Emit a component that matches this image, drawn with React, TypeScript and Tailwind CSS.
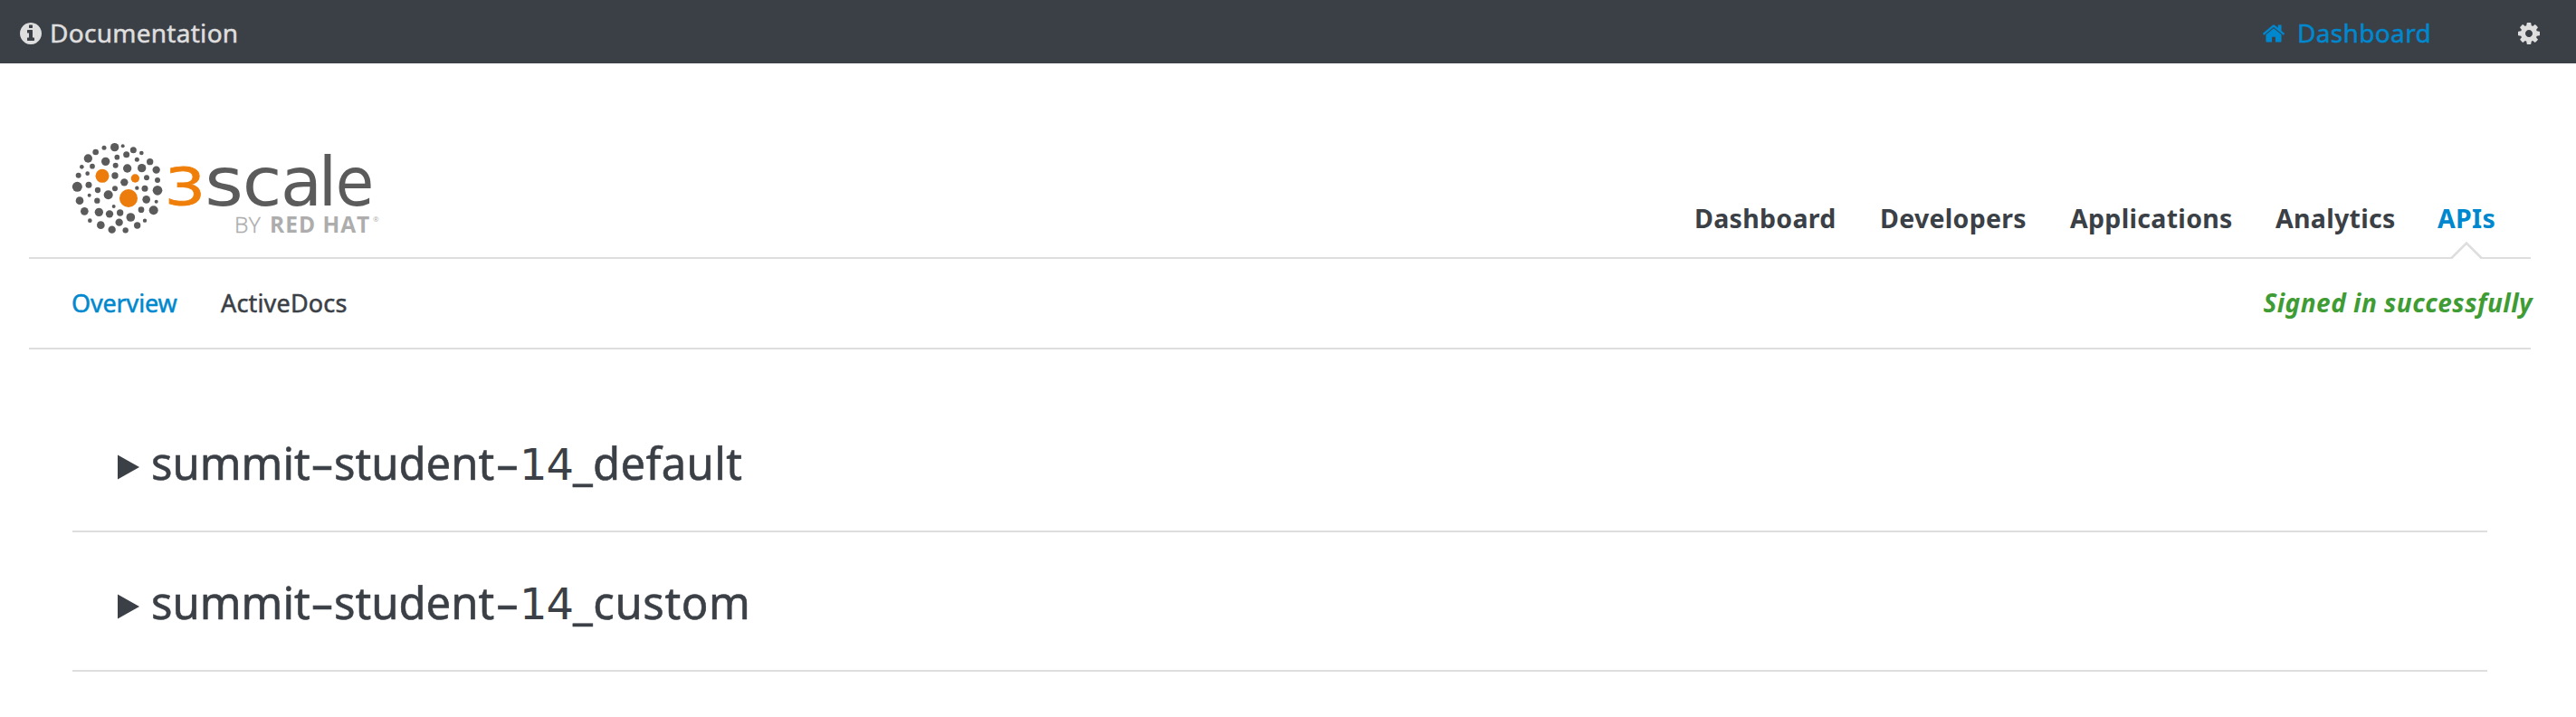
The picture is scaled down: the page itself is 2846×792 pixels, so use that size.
type IconProps = { viewBox: string; path: string; className: string };

const Icon = ({ viewBox, path, className }: IconProps) => (
  <svg viewBox={viewBox} className={className} fill="currentColor" aria-hidden="true">
    <path d={path} />
  </svg>
);

const INFO =
  'M1152 1376v-160q0-14-9-23t-23-9h-96v-512q0-14-9-23t-23-9h-320q-14 0-23 9t-9 23v160q0 14 9 23t23 9h96v320h-96q-14 0-23 9t-9 23v160q0 14 9 23t23 9h448q14 0 23-9t9-23zm-128-896v-160q0-14-9-23t-23-9h-192q-14 0-23 9t-9 23v160q0 14 9 23t23 9h192q14 0 23-9t9-23zm640 416q0 209-103 385.5t-279.5 279.5-385.5 103-385.5-103-279.5-279.5-103-385.5 103-385.5 279.5-279.5 385.5-103 385.5 103 279.5 279.5 103 385.5z';
const HOME =
  'M1472 992v480q0 26-19 45t-45 19h-384v-384h-256v384h-384q-26 0-45-19t-19-45v-480q0-1 .5-3t.5-3l575-474 575 474q1 2 1 6zm223-69l-62 74q-8 9-21 11h-3q-13 0-21-7l-692-577-692 577q-12 8-24 7-13-2-21-11l-62-74q-8-10-7-23.5t11-21.5l719-599q32-26 76-26t76 26l244 204v-195q0-14 9-23t23-9h192q14 0 23 9t9 23v408l219 182q10 8 11 21.5t-7 23.5z';
const COG =
  'M1152 896q0-106-75-181t-181-75-181 75-75 181 75 181 181 75 181-75 75-181zm512-109v222q0 12-8 23t-20 13l-185 28q-19 54-39 91 35 50 107 138 10 12 10 25t-9 23q-27 37-99 108t-94 71q-12 0-26-9l-138-108q-44 23-91 38-16 136-29 186-7 28-36 28h-222q-14 0-24.5-8.5t-11.5-21.5l-28-184q-49-16-90-37l-141 107q-10 9-25 9-14 0-25-11-126-114-165-168-7-10-7-23 0-12 8-23 15-21 51-66.5t54-70.5q-27-50-41-99l-183-27q-13-2-21-12.5t-8-23.5v-222q0-12 8-23t19-13l186-28q14-46 39-92-40-57-107-138-10-12-10-24 0-10 9-23 26-36 98.5-107.5t94.5-71.5q13 0 26 10l138 107q44-23 91-38 16-136 29-186 7-28 36-28h222q14 0 24.5 8.5t11.5 21.5l28 184q49 16 90 37l142-107q9-9 24-9 13 0 25 10 129 119 165 170 7 8 7 22 0 12-8 23-15 21-51 66.5t-54 70.5q26 50 41 98l183 28q13 2 21 12.5t8 23.5z';

// [cx, cy, r] of each grey dot in the globe mark
const DOTS: [number, number, number][] = [
  [170, 53, 14], [197, 49, 6], [135, 55, 7.5], [107, 69, 10], [82, 90, 14], [232, 62, 10.5],
  [209, 77, 10.5], [259, 72, 7], [178, 86, 8.5], [140, 100, 14], [244, 94, 7.5], [287, 101, 11],
  [96, 116, 8.5], [61, 118, 7], [173, 113, 9], [212, 123, 14], [260, 122, 14], [308, 128, 12.5],
  [80, 140, 7], [50, 146, 9], [171, 147, 11], [276, 154, 9], [312, 162, 9], [202, 169, 12.5],
  [84, 178, 10.5], [46, 184, 16.5], [171, 190, 9], [244, 188, 6.5], [270, 190, 10.5], [312, 196, 16],
  [114, 195, 9.5], [86, 212, 6], [149, 211, 15], [54, 230, 13], [112, 230, 9.5], [275, 226, 13],
  [308, 233, 6], [167, 249, 6], [70, 265, 13], [118, 268, 14], [153, 274, 12.5], [188, 270, 11],
  [258, 260, 10], [299, 262, 15], [88, 296, 7], [223, 285, 14.5], [270, 296, 6.5], [185, 302, 12.5],
  [124, 311, 13], [245, 312, 11], [161, 326, 12.5], [206, 328, 9.5],
];

const Logo = () => (
  <div className="flex h-[125px] w-[360px] shrink-0">
    <svg viewBox="0 0 339 375" className="h-[125px] w-[113px] shrink-0" aria-hidden="true">
      {DOTS.map(([x, y, r]) => (
        <circle key={`${x}-${y}`} cx={x} cy={y} r={r} fill="#5b5b5c" />
      ))}
      <circle cx="129" cy="148" r="22.5" fill="#ec7c0b" />
      <circle cx="238" cy="156" r="14" fill="#ec7c0b" />
      <circle cx="216" cy="222" r="30" fill="#ec7c0b" />
    </svg>
    <div className="flex flex-col pt-[28px]">
      <div className="flex h-[62px] items-baseline font-['DejaVu_Sans',sans-serif] text-[75px] leading-[56px] text-[#5b5b5c]">
        <span className="flex w-[43px] scale-x-[1.25] justify-center text-[57px] text-[#f07f0a] [-webkit-text-stroke:0.8px]">3</span>
        <span className="flex w-[43px] scale-x-[1.09] justify-center">s</span>
        <span className="flex w-[41px] scale-x-[1.06] justify-center">c</span>
        <span className="flex w-[46px] justify-center">a</span>
        <span className="flex w-[12px] justify-center">l</span>
        <span className="flex w-[48px] scale-x-[0.92] justify-center">e</span>
      </div>
      <div className="flex pl-[76px] font-['Open_Sans',sans-serif] text-[24.5px] leading-[26px] text-[#adadad]">
        <span className="w-[39px] font-light tracking-[0.5px] [-webkit-text-stroke:0.4px]">BY</span>
        <span className="w-[114px] font-bold tracking-[1px]">RED HAT</span>
        <span className="text-[8px] leading-[14px]">®</span>
      </div>
    </div>
  </div>
);

const ApiRow = ({ suffix, suffixClass }: { suffix: string; suffixClass: string }) => (
  <li className="flex h-[154px] items-center border-b-2 border-[#dedede] pl-[50px]">
    <svg viewBox="0 0 24 28" className="mt-[11px] h-[28px] w-[24px]" fill="currentColor" aria-hidden="true">
      <path d="M0 0.5L24 14L0 27.5z" />
    </svg>
    <h2 className="mt-[3px] flex items-baseline pl-[13px] text-[49px] leading-[60px] whitespace-nowrap [-webkit-text-stroke:0.6px]">
      <span className="w-[176px]">summit</span>
      <span className="flex w-[26px] scale-x-[1.65] justify-center">-</span>
      <span className="w-[178px]">student</span>
      <span className="flex w-[27px] scale-x-[1.65] justify-center">-</span>
      <span className="w-[59px] font-['DejaVu_Sans',sans-serif] text-[48px] tracking-[-1px] [-webkit-text-stroke:0px]">14</span>
      <span className={suffixClass}>{suffix}</span>
    </h2>
  </li>
);

export default function App() {
  return (
    <div className="h-[792px] w-[2846px] overflow-hidden bg-white font-['Noto_Sans',sans-serif] text-[#3b3f46]">
      <header className="flex h-[70px] items-center bg-[#3b3f46] pl-[22px] text-[28px] text-[#dedede] [-webkit-text-stroke:0.5px]">
        <Icon viewBox="128 128 1536 1536" path={INFO} className="mt-[4px] size-[24px]" />
        <span className="pt-px pl-[9px] tracking-[0.28px]">Documentation</span>
        <a className="ml-auto flex items-center text-[#0088ce]">
          <Icon viewBox="89 256 1614 1280" path={HOME} className="mt-[4px] h-[20px] w-[24px]" />
          <span className="w-[258px] pt-px pl-[14px] tracking-[0.35px]">Dashboard</span>
        </a>
        <Icon viewBox="128 128 1536 1536" path={COG} className="mt-[4px] mr-[40px] size-[24px]" />
      </header>

      <div className="mr-[50px] ml-[32px]">
        <div className="relative flex h-[216px] justify-between border-b-2 border-[#dedede]">
          <div className="pt-[75px] pl-[38px]">
            <Logo />
          </div>
          <nav className="flex pt-[151px] text-[28.5px] leading-[40px] font-bold tracking-[0.3px]">
            <a className="w-[205px]">Dashboard</a>
            <a className="w-[210px]">Developers</a>
            <a className="w-[227px]">Applications</a>
            <a className="w-[179px]">Analytics</a>
            <a className="w-[103px] text-[#0088ce]">APIs</a>
          </nav>
          <svg viewBox="0 0 36 20" className="absolute right-[53px] -bottom-[2px] h-[20px] w-[36px]" aria-hidden="true">
            <path d="M2 20L18 3L34 20z" fill="#fff" />
            <path d="M0 19H1.5L18 2.5L34.5 19H36" fill="none" stroke="#dedede" strokeWidth="2.6" />
          </svg>
        </div>

        <div className="flex h-[100px] items-center border-b-2 border-[#dedede] text-[27px] leading-[40px]">
          <a className="w-[212px] pl-[47px] tracking-[-0.15px] text-[#0088ce] [-webkit-text-stroke:0.5px]">Overview</a>
          <a className="tracking-[0.17px] [-webkit-text-stroke:0.5px]">ActiveDocs</a>
          <span className="-mt-[2px] -mr-[2px] ml-auto text-[28px] font-bold tracking-[0.48px] text-[#3f9c35] italic">
            Signed in successfully
          </span>
        </div>

        <ul className="mr-[48px] ml-[48px] pt-[48px]">
          <ApiRow suffix="_default" suffixClass="tracking-[0.35px]" />
          <ApiRow suffix="_custom" suffixClass="tracking-[0.6px]" />
        </ul>
      </div>
    </div>
  );
}
